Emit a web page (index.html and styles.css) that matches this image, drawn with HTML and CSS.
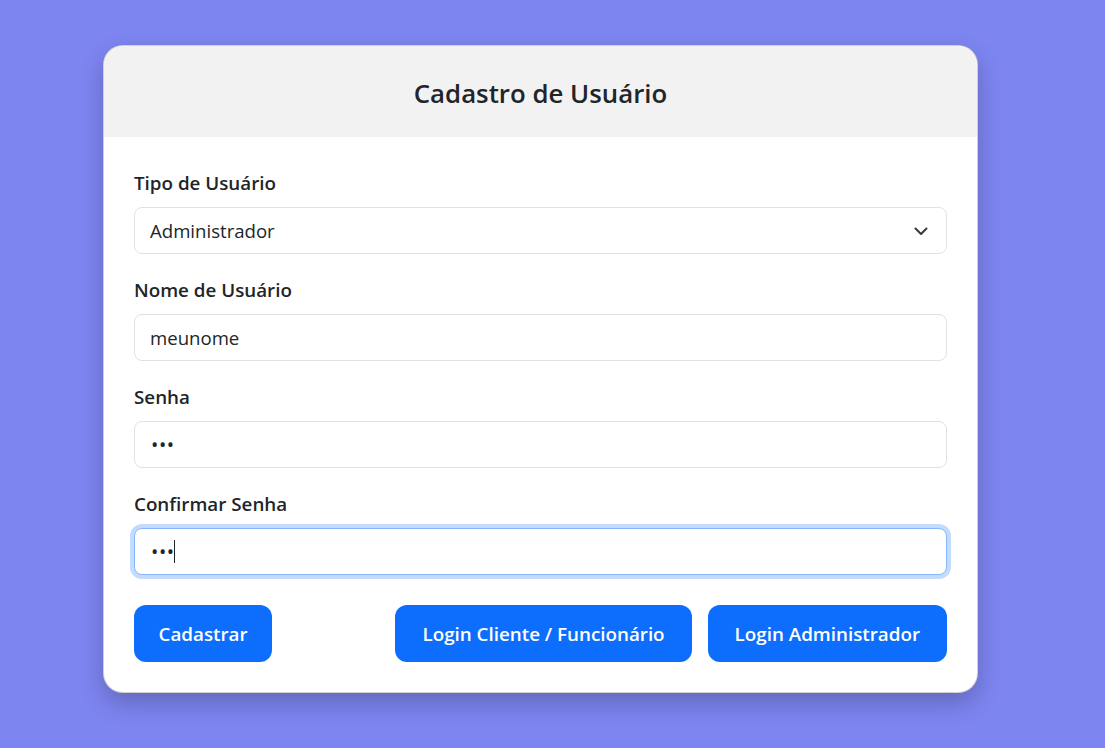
FILE: index.html
```html
<!DOCTYPE html>
<html lang="pt-BR">
<head>
<meta charset="utf-8">
<title>Cadastro de Usuário</title>
<link rel="stylesheet" href="styles.css">
</head>
<body>
<div class="page">
  <div class="card">
    <div class="card-header">
      <h3 class="title">Cadastro de Usuário</h3>
    </div>
    <div class="card-body">
      <div class="field">
        <label class="label">Tipo de Usuário</label>
        <div class="control select">
          <span>Administrador</span>
          <svg class="chev" width="16" height="16" viewBox="0 0 16 16"><path d="M2.5 5.5l5.5 5.5 5.5-5.5" fill="none" stroke="#343a40" stroke-width="2" stroke-linecap="round" stroke-linejoin="round"/></svg>
        </div>
      </div>
      <div class="field">
        <label class="label">Nome de Usuário</label>
        <input class="control" type="text" value="meunome">
      </div>
      <div class="field">
        <label class="label">Senha</label>
        <input class="control pass" type="password" value="123">
      </div>
      <div class="field">
        <label class="label">Confirmar Senha</label>
        <div class="focus-wrap">
          <input class="control pass focused" type="password" value="123">
          <span class="caret"></span>
        </div>
      </div>
      <div class="actions">
        <button class="btn btn-narrow">Cadastrar</button>
        <div class="btn-group">
          <button class="btn">Login Cliente / Funcionário</button>
          <button class="btn">Login Administrador</button>
        </div>
      </div>
    </div>
  </div>
</div>
</body>
</html>
```
FILE: styles.css
```css
* { box-sizing: border-box; }
html, body { margin: 0; padding: 0; }
body {
  background: #7d85f1;
  font-family: "Open Sans", "Noto Sans", sans-serif;
  color: #212529;
  height: 748px;
  overflow: hidden;
}
.page {
  padding: 45px 0 0 103px;
}
.card {
  width: 875px;
  background: #fff;
  border: 1px solid rgba(0,0,0,0.18);
  border-radius: 20px;
  overflow: hidden;
  box-shadow: 0 10px 24px rgba(0,0,0,0.22);
}
.card-header {
  background: #f2f2f2;
  height: 91px;
  display: flex;
  align-items: center;
  justify-content: center;
}
.title {
  margin: 0;
  font-size: 25.8px;
  font-weight: 600;
  line-height: 1.2;
  color: #212529;
  padding-top: 3px;
}
.card-body {
  padding: 34px 30px 30px 30px;
}
.field {
  display: flex;
  flex-direction: column;
  margin-bottom: 24px;
}
.label {
  font-size: 18.8px;
  font-weight: 600;
  line-height: 24px;
  margin-bottom: 12px;
}
.control {
  height: 47px;
  width: 100%;
  border: 1px solid #dee2e6;
  border-radius: 8px;
  padding: 0 15px;
  font-family: inherit;
  font-size: 18.6px;
  color: #212529;
  background: #fff;
  outline: none;
}
.pass {
  letter-spacing: 0.6px;
  padding-left: 16px;
  font-size: 19.5px;
}
.select {
  display: flex;
  align-items: center;
  justify-content: space-between;
  padding-right: 17px;
}
.chev { display: block; }
.focus-wrap {
  position: relative;
}
.focused {
  border-color: #86b7fe;
  box-shadow: 0 0 0 4px rgba(13,110,253,0.25);
}
.caret {
  position: absolute;
  left: 40px;
  top: 12px;
  width: 1px;
  height: 23px;
  background: #212529;
}
.actions {
  display: flex;
  justify-content: space-between;
  align-items: center;
  margin-top: 30px;
}
.btn-group {
  display: flex;
  gap: 16px;
}
.btn {
  height: 57px;
  padding: 0 27px;
  border: none;
  border-radius: 12px;
  background: #0d6efd;
  color: #fff;
  font-family: inherit;
  font-size: 18.8px;
  font-weight: 600;
  cursor: pointer;
}
.btn-narrow {
  padding: 0 24.5px;
}
```
